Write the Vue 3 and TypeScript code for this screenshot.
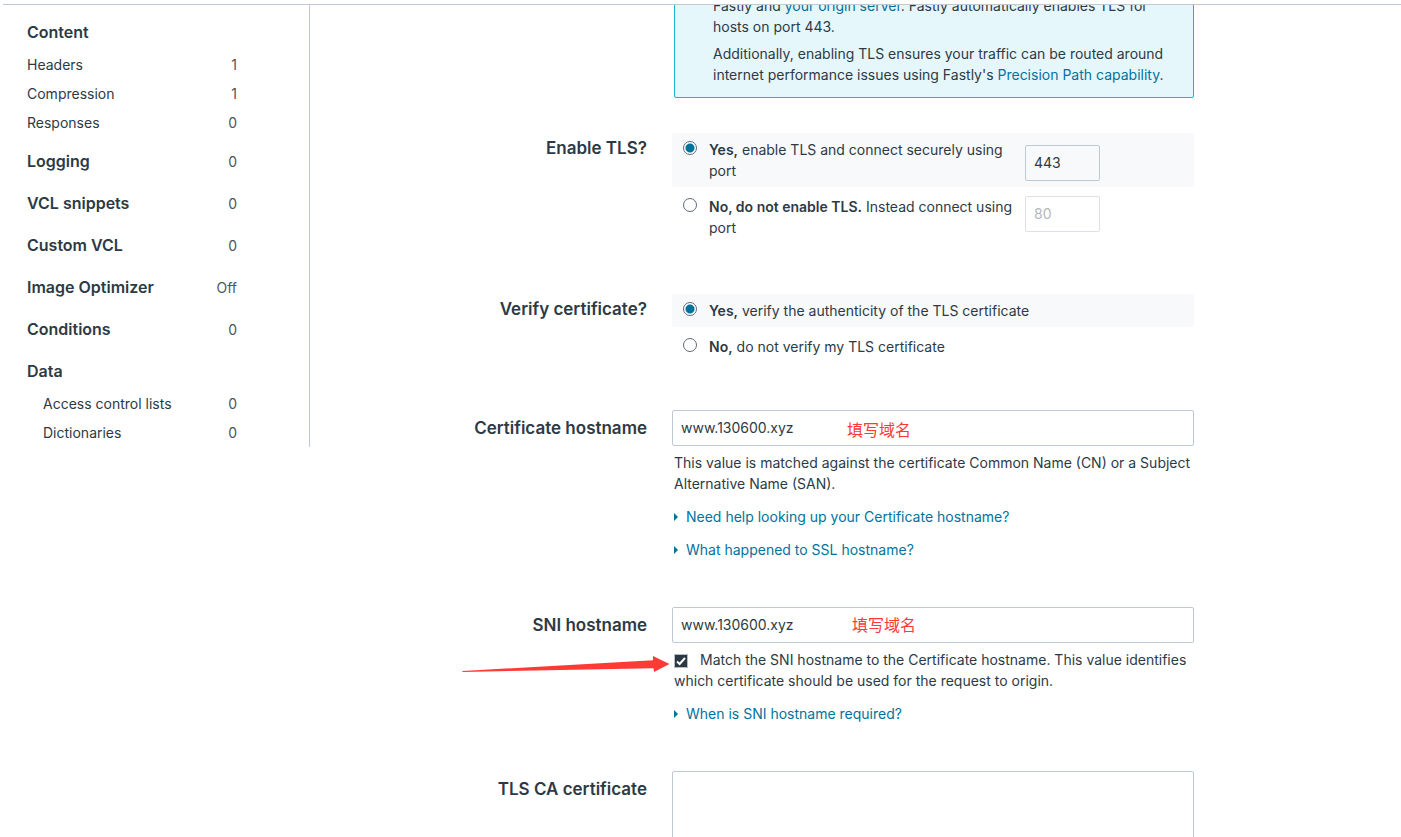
<script setup lang="ts">
import { ref } from 'vue'

interface NavItem {
  label: string
  value: string
}
interface NavSection {
  label: string
  value?: string
  nested?: boolean
  items?: NavItem[]
}

const sections: NavSection[] = [
  {
    label: 'Content',
    items: [
      { label: 'Headers', value: '1' },
      { label: 'Compression', value: '1' },
      { label: 'Responses', value: '0' },
    ],
  },
  { label: 'Logging', value: '0' },
  { label: 'VCL snippets', value: '0' },
  { label: 'Custom VCL', value: '0' },
  { label: 'Image Optimizer', value: 'Off' },
  { label: 'Conditions', value: '0' },
  {
    label: 'Data',
    nested: true,
    items: [
      { label: 'Access control lists', value: '0' },
      { label: 'Dictionaries', value: '0' },
    ],
  },
]

const enableTls = ref('yes')
const verifyCert = ref('yes')
const tlsPort = ref('443')
const plainPort = ref('80')
const certHostname = ref('www.130600.xyz')
const sniHostname = ref('www.130600.xyz')
const matchSni = ref(true)
const caCertificate = ref('')
</script>

<template>
  <div class="page">
    <nav class="sidebar" aria-label="Service configuration">
      <section v-for="s in sections" :key="s.label">
        <div class="nav-row nav-head">
          <h2>{{ s.label }}</h2>
          <span v-if="s.value" class="count">{{ s.value }}</span>
        </div>
        <ul v-if="s.items" :class="{ nested: s.nested }">
          <li v-for="i in s.items" :key="i.label" class="nav-row">
            <span>{{ i.label }}</span>
            <span class="count">{{ i.value }}</span>
          </li>
        </ul>
      </section>
    </nav>

    <main class="form">
      <div class="row first">
        <div class="field">
          <div class="notice">
            <p>
              Fastly and <a href="#">your origin server</a>. Fastly automatically enables TLS for
              hosts on port 443.
            </p>
            <p>
              Additionally, enabling TLS ensures your traffic can be routed around internet
              performance issues using Fastly's <a href="#">Precision Path capability</a>.
            </p>
          </div>
        </div>
      </div>

      <div class="row" role="radiogroup" aria-labelledby="tls-label">
        <span id="tls-label" class="label">Enable TLS?</span>
        <div class="field choices">
          <div class="choice" :class="{ active: enableTls === 'yes' }">
            <input id="tls-yes" v-model="enableTls" type="radio" name="tls" value="yes" />
            <label for="tls-yes" class="with-port"><b>Yes,</b> enable TLS and connect securely using port</label>
            <input v-model="tlsPort" class="text port" type="text" aria-label="TLS port" :disabled="enableTls !== 'yes'" />
          </div>
          <div class="choice" :class="{ active: enableTls === 'no' }">
            <input id="tls-no" v-model="enableTls" type="radio" name="tls" value="no" />
            <label for="tls-no" class="with-port"><b>No, do not enable TLS.</b> Instead connect using port</label>
            <input v-model="plainPort" class="text port" type="text" aria-label="Port without TLS" :disabled="enableTls !== 'no'" />
          </div>
        </div>
      </div>

      <div class="row" role="radiogroup" aria-labelledby="verify-label">
        <span id="verify-label" class="label">Verify certificate?</span>
        <div class="field choices">
          <div class="choice" :class="{ active: verifyCert === 'yes' }">
            <input id="verify-yes" v-model="verifyCert" type="radio" name="verify" value="yes" />
            <label for="verify-yes"><b>Yes,</b> verify the authenticity of the TLS certificate</label>
          </div>
          <div class="choice" :class="{ active: verifyCert === 'no' }">
            <input id="verify-no" v-model="verifyCert" type="radio" name="verify" value="no" />
            <label for="verify-no"><b>No,</b> do not verify my TLS certificate</label>
          </div>
        </div>
      </div>

      <div class="row">
        <label for="cert" class="label">Certificate hostname</label>
        <div class="field">
          <input id="cert" v-model="certHostname" class="text" type="text" />
          <span class="note note-cert">填写域名</span>
          <p class="help">
            This value is matched against the certificate Common Name (CN) or a Subject Alternative
            Name (SAN).
          </p>
          <a href="#" class="more">Need help looking up your Certificate hostname?</a>
          <a href="#" class="more">What happened to SSL hostname?</a>
        </div>
      </div>

      <div class="row">
        <label for="sni" class="label">SNI hostname</label>
        <div class="field">
          <input id="sni" v-model="sniHostname" class="text" type="text" />
          <span class="note note-sni">填写域名</span>
          <svg class="arrow" width="208" height="18" viewBox="0 0 208 18" aria-hidden="true">
            <path d="M0.500 16 L191 5.200 L191 1 L207.500 9 L192 17 L191.500 13.200 L0.500 17 Z" fill="#fd3a36" />
          </svg>
          <p class="help">
            <input id="match" v-model="matchSni" type="checkbox" />
            <label for="match">Match the SNI hostname to the Certificate hostname. This value identifies
              which certificate should be used for the request to origin.</label>
          </p>
          <a href="#" class="more">When is SNI hostname required?</a>
        </div>
      </div>

      <div class="row">
        <label for="ca" class="label">TLS CA certificate</label>
        <div class="field">
          <textarea id="ca" v-model="caCertificate" class="text" rows="8"></textarea>
        </div>
      </div>
    </main>
  </div>
</template>

<style>
body {
  background: #fff;
}
</style>

<style scoped>
.page {
  box-sizing: border-box;
  height: calc(100vh - 4px);
  margin: 4px 0 0 3px;
  border-top: 1px solid #c0c8d1;
  display: flex;
  align-items: flex-start;
  overflow: hidden;
  font: 14px/21px Inter, "Noto Sans CJK SC", sans-serif;
  color: #2d3a45;
}
h2,
p,
ul {
  margin: 0;
  padding: 0;
}
a {
  color: #00739c;
  text-decoration: none;
}
b {
  font-weight: 600;
}
.sidebar {
  box-sizing: border-box;
  flex: 0 0 307px;
  padding: 13px 72px 4px 24px;
  border-right: 1px solid #bfc9d3;
  display: flex;
  flex-direction: column;
  gap: 14px;
}
.nav-row {
  display: flex;
  justify-content: space-between;
  align-items: center;
}
.nav-head {
  height: 28px;
}
h2 {
  font-size: 16px;
  font-weight: 600;
}
.sidebar ul {
  list-style: none;
  display: flex;
  flex-direction: column;
  gap: 8px;
  padding-top: 8px;
}
.sidebar ul.nested {
  padding-left: 16px;
}
.count {
  color: #4a5560;
}
.form {
  flex: 1;
  min-width: 0;
  padding-right: 207px;
  display: flex;
  flex-direction: column;
  gap: 47px;
}
.row {
  display: grid;
  grid-template-columns: minmax(0, 337fr) minmax(0, 522fr);
  column-gap: 25px;
}
.row.first {
  margin: -20px 0 -15px;
}
.row.first .field {
  grid-column: 2;
}
.label {
  font-size: 17px;
  font-weight: 600;
  line-height: 36px;
  text-align: right;
}
.field {
  position: relative;
  display: flex;
  flex-direction: column;
}
.notice {
  margin-left: 2px;
  padding: 9px 26px 12px 38px;
  border: 1px solid #19b3d6;
  border-radius: 2px;
  background: #e6f7fc;
  display: flex;
  flex-direction: column;
  gap: 6px;
}
.choices {
  gap: 3px;
  padding-top: 3px;
}
.choice {
  display: flex;
  align-items: flex-start;
  padding: 6px 94px 6px 11px;
  border-radius: 2px;
}
.choice.active {
  background: #f7f9fb;
}
.choice.active .port {
  align-self: flex-end;
}
.choice label {
  flex: 1;
}
.choice label.with-port {
  flex: 0 1 304px;
}
input[type='radio'] {
  appearance: none;
  box-sizing: border-box;
  flex: none;
  width: 14px;
  height: 14px;
  margin: 2px 12px 0 0;
  border: 1px solid #5f6b76;
  border-radius: 50%;
  background: #fff;
}
input[type='radio']:checked {
  background: radial-gradient(circle, #00739c 4px, #fff 5px);
}
.text {
  box-sizing: border-box;
  width: 100%;
  height: 36px;
  padding: 0 8px 2px;
  border: 1px solid #bfc9d3;
  border-radius: 2px;
  background: #fff;
  font: inherit;
  color: inherit;
}
textarea.text {
  height: auto;
  padding: 8px;
  resize: none;
}
.text.port {
  flex: none;
  width: 75px;
  margin-left: 12px;
  background: transparent;
}
.port:disabled {
  border-color: #dde1e6;
  color: #b3b8bd;
}
.help {
  margin: 6px 0 0 2px;
}
.more {
  display: flex;
  align-items: center;
  gap: 8px;
  margin: 12px 0 0 2px;
}
.more::before {
  content: '';
  border: 4px solid transparent;
  border-left-color: #00739c;
  border-right-width: 0;
}
input[type='checkbox'] {
  appearance: none;
  width: 14px;
  height: 14px;
  margin: 0 12px 0 0;
  vertical-align: -3px;
  border: 1px solid #b4bcc5;
  box-sizing: border-box;
  background: #fff;
}
input[type='checkbox']:checked {
  background: #2b3742 url("data:image/svg+xml,%3Csvg xmlns='http://www.w3.org/2000/svg' viewBox='0 0 12 12'%3E%3Cpath d='M2 6.500 4.600 9 10 3' fill='none' stroke='white' stroke-width='2'/%3E%3C/svg%3E") center / 12px 12px;
}
.note {
  position: absolute;
  font-size: 16px;
  line-height: 20px;
  color: #fd3a36;
}
.note-cert {
  top: 10px;
  left: 175px;
}
.note-sni {
  top: 8px;
  left: 180px;
}
.arrow {
  position: absolute;
  top: 48px;
  left: -210px;
}
</style>
